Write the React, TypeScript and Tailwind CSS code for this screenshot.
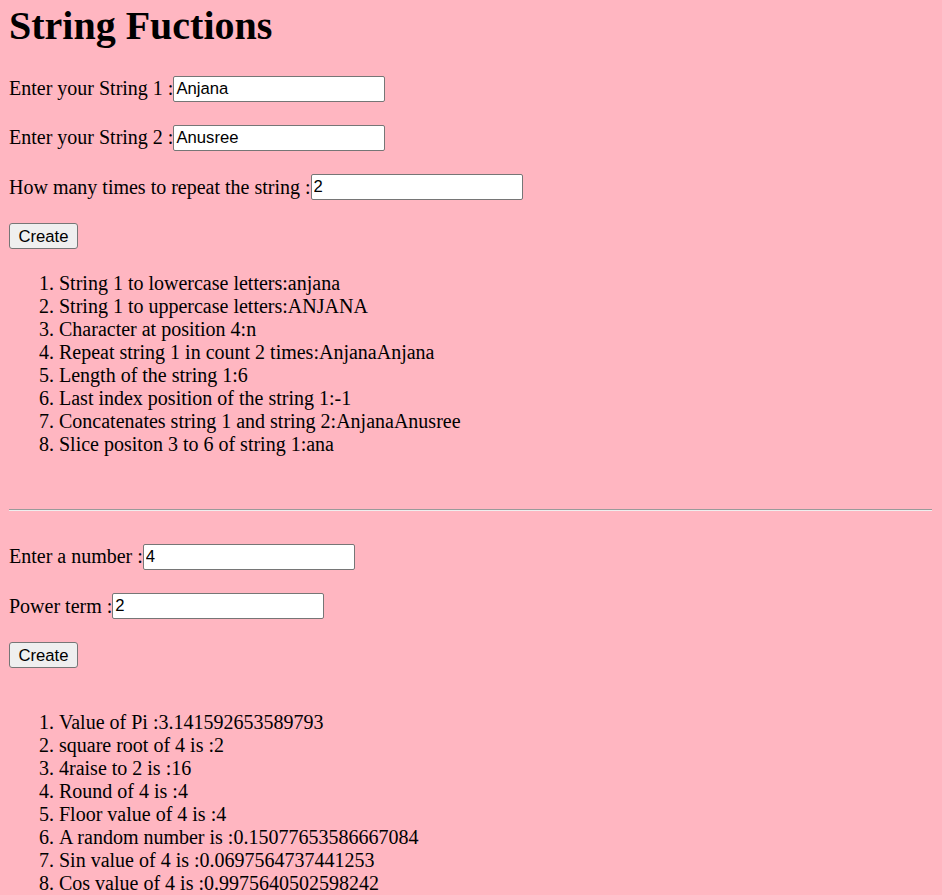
const serif = "font-['Liberation_Serif','Times_New_Roman',serif]";
const sans = "font-['Liberation_Sans',Arial,sans-serif]";

function Field({ label, value }: { label: string; value: string }) {
  return (
    <div className="flex items-center h-[26px]">
      <span className="leading-[23px] whitespace-pre">{label}</span>
      <input
        readOnly
        value={value}
        className={`${sans} w-[212px] h-[26px] border border-[#767676] rounded-[2px] bg-white px-[2px] text-[16.67px] text-black outline-none`}
      />
    </div>
  );
}

function CreateButton() {
  return (
    <div className="flex">
      <button
        className={`${sans} h-[26px] w-[69px] border border-[#767676] rounded-[3px] bg-[#efefef] text-[16.67px] text-black`}
      >
        Create
      </button>
    </div>
  );
}

export default function App() {
  const strings = [
    "String 1 to lowercase letters:anjana",
    "String 1 to uppercase letters:ANJANA",
    "Character at position 4:n",
    "Repeat string 1 in count 2 times:AnjanaAnjana",
    "Length of the string 1:6",
    "Last index position of the string 1:-1",
    "Concatenates string 1 and string 2:AnjanaAnusree",
    "Slice positon 3 to 6 of string 1:ana",
  ];
  const maths = [
    "Value of Pi :3.141592653589793",
    "square root of 4 is :2",
    "4raise to 2 is :16",
    "Round of 4 is :4",
    "Floor value of 4 is :4",
    "A random number is :0.15077653586667084",
    "Sin value of 4 is :0.0697564737441253",
    "Cos value of 4 is :0.9975640502598242",
  ];

  return (
    <div className={`${serif} min-h-[895px] bg-[#ffb6c1] text-black text-[20px] pl-[9px] pr-[10px] pt-[3px] overflow-hidden`}>
      <h1 className="text-[40px] font-bold leading-[46px]">String Fuctions</h1>

      <div className="mt-[26.5px] flex flex-col gap-[23.3px]">
        <Field label="Enter your String 1 :" value="Anjana" />
        <Field label="Enter your String 2 :" value="Anusree" />
        <Field label="How many times to repeat the string :" value="2" />
        <CreateButton />
      </div>

      <ol className="mt-[22.5px] list-decimal pl-[50px] leading-[23px]">
        {strings.map((s) => (
          <li key={s}>{s}</li>
        ))}
      </ol>

      <div className="mt-[53px] border-t border-t-[#9a9a9a] border-b border-b-[#eeeeee]" />

      <div className="mt-[33px] flex flex-col gap-[23.3px]">
        <Field label="Enter a number :" value="4" />
        <Field label="Power term :" value="2" />
        <CreateButton />
      </div>

      <ol className="mt-[43px] list-decimal pl-[50px] leading-[23px]">
        {maths.map((s) => (
          <li key={s}>{s}</li>
        ))}
      </ol>
    </div>
  );
}
